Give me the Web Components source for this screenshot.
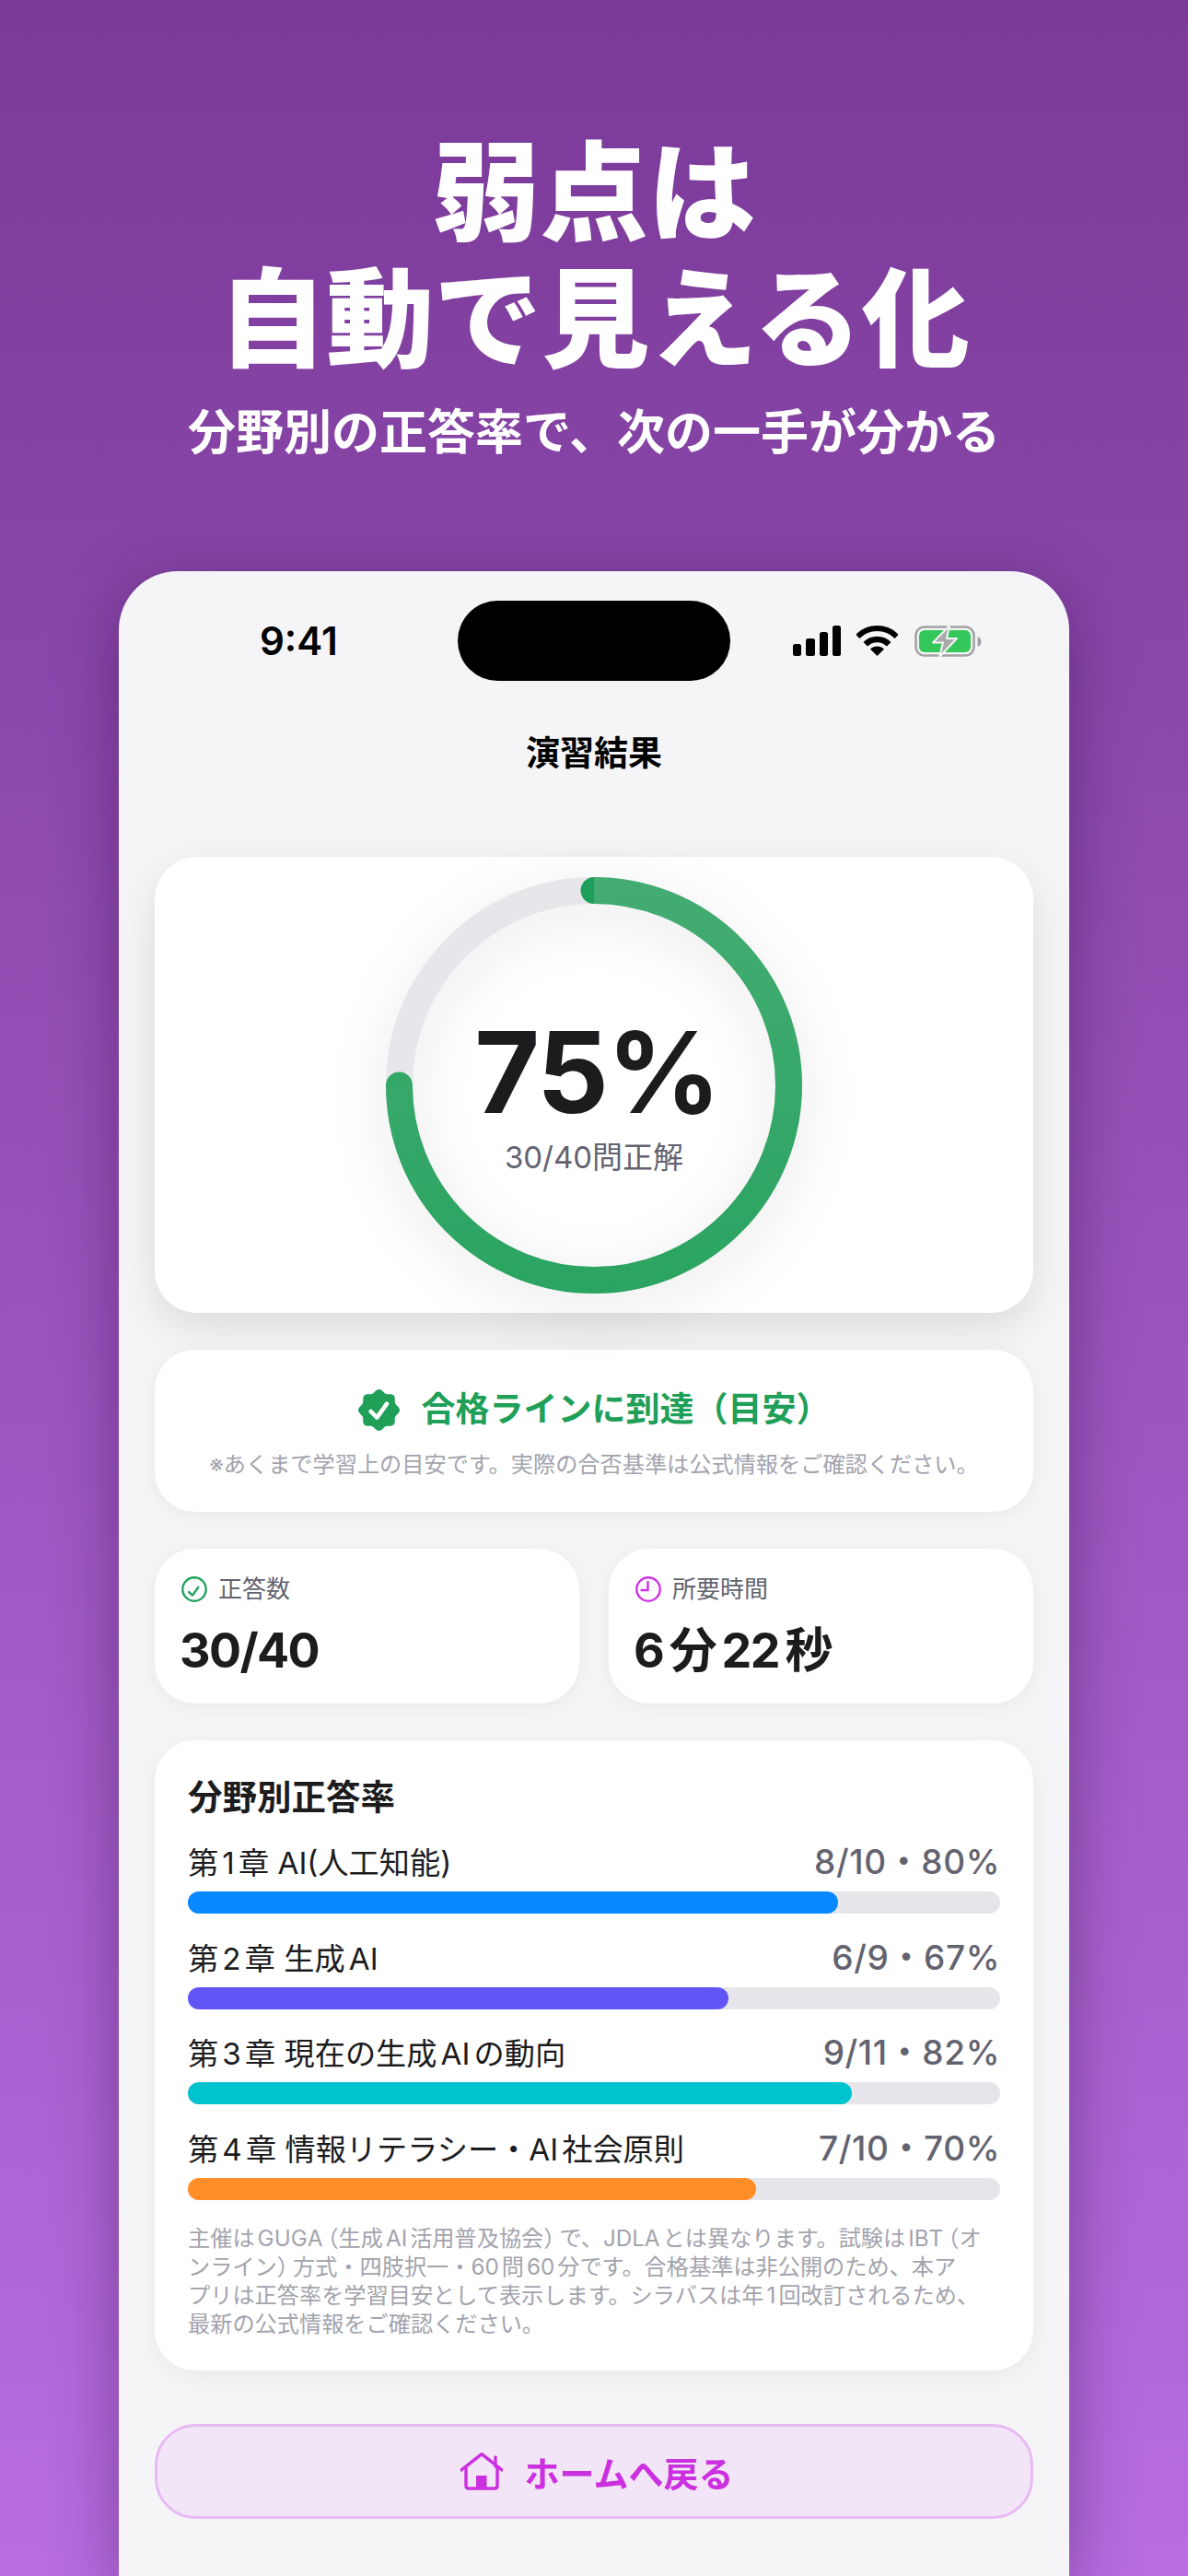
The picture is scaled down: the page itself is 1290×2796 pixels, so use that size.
<!DOCTYPE html>
<html lang="ja">
<head>
<meta charset="utf-8">
<title>演習結果</title>
<style>
  html, body { margin: 0; padding: 0; }
  body {
    width: 1290px;
    height: 2796px;
    overflow: hidden;
    background: linear-gradient(180deg, #7a3a98 0%, #b86ce0 100%);
    font-family: Inter, "Noto Sans CJK JP", sans-serif;
    text-autospace: normal;
  }
  /* narrower full-width brackets in the small print */
  .pc { letter-spacing: -7px; }
</style>
</head>
<body>
<promo-header>
  <span slot="title">弱点は<br>自動で見える化</span>
  <span slot="sub">分野別の正答率で、次の一手が分かる</span>
</promo-header>

<phone-frame heading="演習結果">
  <result-ring pct="75">
    <span slot="value">75%</span>
    <span slot="caption">30/40問正解</span>
  </result-ring>

  <pass-card>
    <span slot="title">合格ラインに到達（目安）</span>
    <span slot="note">※あくまで学習上の目安です。実際の合否基準は公式情報をご確認ください。</span>
  </pass-card>

  <stat-row>
    <stat-card icon="check" label="正答数" value="30/40"></stat-card>
    <stat-card icon="clock" label="所要時間" value="6分22秒"></stat-card>
  </stat-row>

  <chapter-card heading="分野別正答率">
    <chapter-row label="第1章 AI(人工知能)" value="8/10・80%" pct="80" color="#0688ff"></chapter-row>
    <chapter-row label="第2章 生成AI" value="6/9・67%" pct="66.6" color="#6155f5"></chapter-row>
    <chapter-row label="第3章 現在の生成AIの動向" value="9/11・82%" pct="81.8" color="#00c3d0"></chapter-row>
    <chapter-row label="第4章 情報リテラシー・AI社会原則" value="7/10・70%" pct="70" color="#ff8d28"></chapter-row>
    <span slot="note">主催はGUG<span class="pc">A</span>（生成AI活用普及協会<span class="pc">）</span>で、JDLAとは異なります。試験はIB<span class="pc">T</span>（オ<br>ンライン<span class="pc">）</span>方式・四肢択一・60問60分です。合格基準は非公開のため、本ア<br>プリは正答率を学習目安として表示します。シラバスは年1回改訂されるため、<br>最新の公式情報をご確認ください。</span>
  </chapter-card>

  <home-button>ホームへ戻る</home-button>
</phone-frame>

<script>
const headerTpl = document.createElement('template');
headerTpl.innerHTML = `
  <style>
    :host { display: block; padding-top: 141px; text-align: center; color: #fff; }
    .title { font-size: 117px; line-height: 137px; font-weight: 900; }
    .sub { font-size: 52px; line-height: 60px; font-weight: 700; margin-top: 25px; }
  </style>
  <div class="title"><slot name="title"></slot></div>
  <div class="sub"><slot name="sub"></slot></div>
`;
class PromoHeader extends HTMLElement {
  constructor() {
    super();
    this.attachShadow({ mode: 'open' });
    this.shadowRoot.appendChild(headerTpl.content.cloneNode(true));
  }
}
customElements.define('promo-header', PromoHeader);

const statusTpl = document.createElement('template');
statusTpl.innerHTML = `
  <style>
    :host { display: grid; grid-template-columns: 1fr 296px 1fr; align-items: center; padding-top: 32px; }
    .time { padding-left: 153px; font-size: 42px; line-height: 50px; font-weight: 600; color: #000; }
    .island { height: 87px; border-radius: 44px; background: #000; }
    .icons { display: flex; justify-content: flex-end; align-items: center; padding-right: 95px; }
    svg { display: block; }
    .wifi { margin: 0 18px 0 17px; }
  </style>
  <div class="time">9:41</div>
  <div class="island"></div>
  <div class="icons">
    <svg width="52" height="33" viewBox="0 0 52 33" fill="#000">
      <rect x="0" y="20" width="9" height="13" rx="2.5"/>
      <rect x="14" y="14" width="10" height="19" rx="2.5"/>
      <rect x="29" y="7" width="9" height="26" rx="2.5"/>
      <rect x="43" y="0" width="9" height="33" rx="2.5"/>
    </svg>
    <svg class="wifi" width="45" height="33" viewBox="0 0 45 33">
      <path d="M1.3 11.8A30 30 0 0 1 43.7 11.8" fill="none" stroke="#000" stroke-width="6"/>
      <path d="M9.8 20.3A18 18 0 0 1 35.2 20.3" fill="none" stroke="#000" stroke-width="6.5"/>
      <path d="M22.5 33L15 25.5A10.6 10.6 0 0 1 30 25.5Z" fill="#000"/>
    </svg>
    <svg width="73" height="34" viewBox="0 0 73 34">
      <rect x="1.5" y="1.5" width="63" height="31" rx="9" fill="none" stroke="#a3a3a3" stroke-width="2.6"/>
      <rect x="5" y="5" width="56" height="24" rx="6" fill="#34c759"/>
      <path d="M68.5 12c2.5 .5 4 2.6 4 5.5s-1.500 5-4 5.500z" fill="#a3a3a3"/>
      <path d="M38 0L20 18.500H31L27 34L46 14H35Z" fill="#a9a9a9" stroke="#f5f5f8" stroke-width="2" stroke-linejoin="round"/>
    </svg>
  </div>
`;
class StatusBar extends HTMLElement {
  constructor() {
    super();
    this.attachShadow({ mode: 'open' });
    this.shadowRoot.appendChild(statusTpl.content.cloneNode(true));
  }
}
customElements.define('status-bar', StatusBar);

const phoneTpl = document.createElement('template');
phoneTpl.innerHTML = `
  <style>
    :host {
      display: block;
      margin: 120px 129px 0;
      height: 2176px;
      background: #f5f5f8;
      border-radius: 64px 64px 0 0;
      box-shadow: 0 16px 70px rgba(30, 0, 50, 0.38);
    }
    .nav { margin-top: 54px; text-align: center; font-size: 37px; line-height: 50px; font-weight: 700; color: #000; }
    .content { display: flex; flex-direction: column; gap: 40px; padding: 87px 39px 0; }
  </style>
  <status-bar></status-bar>
  <div class="nav"></div>
  <div class="content"><slot></slot></div>
`;
class PhoneFrame extends HTMLElement {
  constructor() {
    super();
    this.attachShadow({ mode: 'open' });
    this.shadowRoot.appendChild(phoneTpl.content.cloneNode(true));
    this.shadowRoot.querySelector('.nav').textContent = this.getAttribute('heading');
  }
}
customElements.define('phone-frame', PhoneFrame);

const ringTpl = document.createElement('template');
ringTpl.innerHTML = `
  <style>
    :host {
      display: flex;
      justify-content: center;
      height: 495px;
      box-sizing: border-box;
      padding-top: 22px;
      background: #fff;
      border-radius: 46px;
      box-shadow: 0 16px 46px rgba(0, 0, 0, 0.1);
    }
    .wrap { display: grid; width: 452px; height: 452px; }
    .wrap > * { grid-area: 1 / 1; }
    svg { display: block; filter: drop-shadow(0 14px 30px rgba(0, 0, 0, 0.1)); }
    .center { display: flex; flex-direction: column; align-items: center; padding-top: 147px; }
    .value { margin-left: 6px; font-size: 122px; line-height: 130px; font-weight: 700; color: #1c1c1e; letter-spacing: -2px; }
    .caption { font-size: 33px; line-height: 44px; color: #636370; margin-top: 5px; text-autospace: no-autospace; }
  </style>
  <div class="wrap">
    <svg width="452" height="452" viewBox="0 0 452 452">
      <defs>
        <linearGradient id="g" gradientUnits="userSpaceOnUse" x1="0" y1="0" x2="0" y2="452">
          <stop offset="0" stop-color="#44ac72"/>
          <stop offset="1" stop-color="#2aa461"/>
        </linearGradient>
      </defs>
      <circle cx="226" cy="226" r="211.500" fill="none" stroke="#e6e6eb" stroke-width="29"/>
      <circle cx="226" cy="14.500" r="14.500" fill="#1fa05a"/>
      <circle cx="14.500" cy="226" r="14.500" fill="#33a866"/>
      <path d="M226 14.500A211.500 211.500 0 1 1 14.500 226" fill="none" stroke="url(#g)" stroke-width="29"/>
    </svg>
    <div class="center">
      <div class="value"><slot name="value"></slot></div>
      <div class="caption"><slot name="caption"></slot></div>
    </div>
  </div>
`;
class ResultRing extends HTMLElement {
  constructor() {
    super();
    this.attachShadow({ mode: 'open' });
    this.shadowRoot.appendChild(ringTpl.content.cloneNode(true));
  }
}
customElements.define('result-ring', ResultRing);

const passTpl = document.createElement('template');
passTpl.innerHTML = `
  <style>
    :host {
      display: block;
      height: 176px;
      box-sizing: border-box;
      padding-top: 40px;
      background: #fff;
      border-radius: 44px;
      box-shadow: 0 4px 22px rgba(0, 0, 0, 0.05);
      text-align: center;
    }
    .head { display: flex; justify-content: center; align-items: center; gap: 24px; }
    .title { font-size: 37px; line-height: 50px; font-weight: 700; color: #1f9f58; }
    .note { margin-top: 18px; font-size: 24.2px; line-height: 34px; color: #a3a3ad; }
    svg { display: block; }
  </style>
  <div class="head">
    <svg width="45" height="45" viewBox="0 0 45 45">
      <path class="seal" fill="#1f9f58"/>
      <path d="M13.700 24L20.300 30.700L31 15.700" fill="none" stroke="#fff" stroke-width="4.600" stroke-linecap="round" stroke-linejoin="round"/>
    </svg>
    <div class="title"><slot name="title"></slot></div>
  </div>
  <div class="note"><slot name="note"></slot></div>
`;
class PassCard extends HTMLElement {
  constructor() {
    super();
    this.attachShadow({ mode: 'open' });
    this.shadowRoot.appendChild(passTpl.content.cloneNode(true));
    // scalloped seal outline, 8 bumps
    let d = '';
    for (let i = 0; i < 96; i++) {
      const a = (i / 96) * Math.PI * 2;
      const r = 20.8 + 1.7 * Math.cos(a * 8);
      const x = 22.5 + r * Math.sin(a);
      const y = 22.5 - r * Math.cos(a);
      d += (i ? 'L' : 'M') + x.toFixed(2) + ' ' + y.toFixed(2);
    }
    this.shadowRoot.querySelector('.seal').setAttribute('d', d + 'Z');
  }
}
customElements.define('pass-card', PassCard);

const statRowTpl = document.createElement('template');
statRowTpl.innerHTML = `
  <style>
    :host { display: grid; grid-template-columns: 1fr 1fr; gap: 32px; }
  </style>
  <slot></slot>
`;
class StatRow extends HTMLElement {
  constructor() {
    super();
    this.attachShadow({ mode: 'open' });
    this.shadowRoot.appendChild(statRowTpl.content.cloneNode(true));
  }
}
customElements.define('stat-row', StatRow);

const statIcons = {
  check: `<svg width="28" height="28" viewBox="0 0 28 28" fill="none" stroke="#1fa35b" stroke-width="2.400" stroke-linecap="round" stroke-linejoin="round">
    <circle cx="14" cy="14" r="12.700"/><path d="M8 17L12 20.600L18.300 11.800"/></svg>`,
  clock: `<svg width="28" height="28" viewBox="0 0 28 28" fill="none" stroke="#cf30e5" stroke-width="2.400" stroke-linecap="round" stroke-linejoin="round">
    <circle cx="14" cy="14" r="12.700"/><path d="M13.500 6V15H6.500"/></svg>`
};
const statTpl = document.createElement('template');
statTpl.innerHTML = `
  <style>
    :host {
      display: block;
      height: 168px;
      box-sizing: border-box;
      padding: 27px 29px 0;
      background: #fff;
      border-radius: 44px;
      box-shadow: 0 4px 22px rgba(0, 0, 0, 0.05);
    }
    .label { display: flex; align-items: center; gap: 12px; font-size: 26px; line-height: 34px; color: #636370; }
    .value { margin: 20px 0 0 -2px; font-size: 52px; line-height: 60px; font-weight: 700; color: #1c1c1e; letter-spacing: -1.6px; }
    svg { display: block; }
  </style>
  <div class="label"><span class="icon"></span><span class="text"></span></div>
  <div class="value"></div>
`;
class StatCard extends HTMLElement {
  constructor() {
    super();
    this.attachShadow({ mode: 'open' });
    this.shadowRoot.appendChild(statTpl.content.cloneNode(true));
    this.shadowRoot.querySelector('.icon').innerHTML = statIcons[this.getAttribute('icon')];
    this.shadowRoot.querySelector('.text').textContent = this.getAttribute('label');
    this.shadowRoot.querySelector('.value').textContent = this.getAttribute('value');
  }
}
customElements.define('stat-card', StatCard);

const chapterCardTpl = document.createElement('template');
chapterCardTpl.innerHTML = `
  <style>
    :host {
      display: block;
      height: 684px;
      box-sizing: border-box;
      padding: 40px 36px 0;
      background: #fff;
      border-radius: 44px;
      box-shadow: 0 6px 26px rgba(0, 0, 0, 0.05);
    }
    h2 { margin: 0 0 26px; font-size: 37.5px; line-height: 44px; font-weight: 700; color: #1c1c1e; }
    .rows { display: flex; flex-direction: column; gap: 25.5px; }
    .note { margin-top: 26px; font-size: 24.2px; line-height: 31px; color: #a3a3ad; white-space: nowrap; }
  </style>
  <h2></h2>
  <div class="rows"><slot></slot></div>
  <div class="note"><slot name="note"></slot></div>
`;
class ChapterCard extends HTMLElement {
  constructor() {
    super();
    this.attachShadow({ mode: 'open' });
    this.shadowRoot.appendChild(chapterCardTpl.content.cloneNode(true));
    this.shadowRoot.querySelector('h2').textContent = this.getAttribute('heading');
  }
}
customElements.define('chapter-card', ChapterCard);

const chapterRowTpl = document.createElement('template');
chapterRowTpl.innerHTML = `
  <style>
    :host { display: block; }
    .top { display: flex; justify-content: space-between; align-items: baseline; height: 44px; font-size: 33.2px; line-height: 44px; color: #1c1c1e; }
    .val { color: #636370; font-weight: 500; font-size: 37px; letter-spacing: 0.6px; }
    .track { margin-top: 10px; height: 24px; border-radius: 12px; background: #e5e5ea; }
    .fill { height: 100%; border-radius: 12px; }
  </style>
  <div class="top"><span class="lab"></span><span class="val"></span></div>
  <div class="track"><div class="fill"></div></div>
`;
class ChapterRow extends HTMLElement {
  constructor() {
    super();
    this.attachShadow({ mode: 'open' });
    this.shadowRoot.appendChild(chapterRowTpl.content.cloneNode(true));
    this.shadowRoot.querySelector('.lab').textContent = this.getAttribute('label');
    this.shadowRoot.querySelector('.val').textContent = this.getAttribute('value');
    const fill = this.shadowRoot.querySelector('.fill');
    fill.style.width = this.getAttribute('pct') + '%';
    fill.style.background = this.getAttribute('color');
  }
}
customElements.define('chapter-row', ChapterRow);

const homeTpl = document.createElement('template');
homeTpl.innerHTML = `
  <style>
    :host {
      display: flex;
      justify-content: center;
      align-items: center;
      gap: 24px;
      height: 103px;
      box-sizing: border-box;
      margin-top: 18px;
      padding-left: 6px;
      background: #f3e5f8;
      border: 3px solid #e9b9f3;
      border-radius: 44px;
      font-size: 38px;
      font-weight: 700;
      color: #cb30e0;
    }
    svg { display: block; }
  </style>
  <svg width="46" height="41" viewBox="0 0 46 41" fill="none" stroke="#cb30e0" stroke-width="3.400" stroke-linecap="round" stroke-linejoin="round">
    <path d="M1 19L23 1.700L45 19"/>
    <path d="M6 15.500V36Q6 39 9 39H37Q40 39 40 36V15.500"/>
    <path d="M38 5V15"/>
    <rect x="17" y="25" width="11.500" height="14" fill="#cb30e0" stroke="none"/>
  </svg>
  <span><slot></slot></span>
`;
class HomeButton extends HTMLElement {
  constructor() {
    super();
    this.attachShadow({ mode: 'open' });
    this.shadowRoot.appendChild(homeTpl.content.cloneNode(true));
  }
}
customElements.define('home-button', HomeButton);
</script>
</body>
</html>
